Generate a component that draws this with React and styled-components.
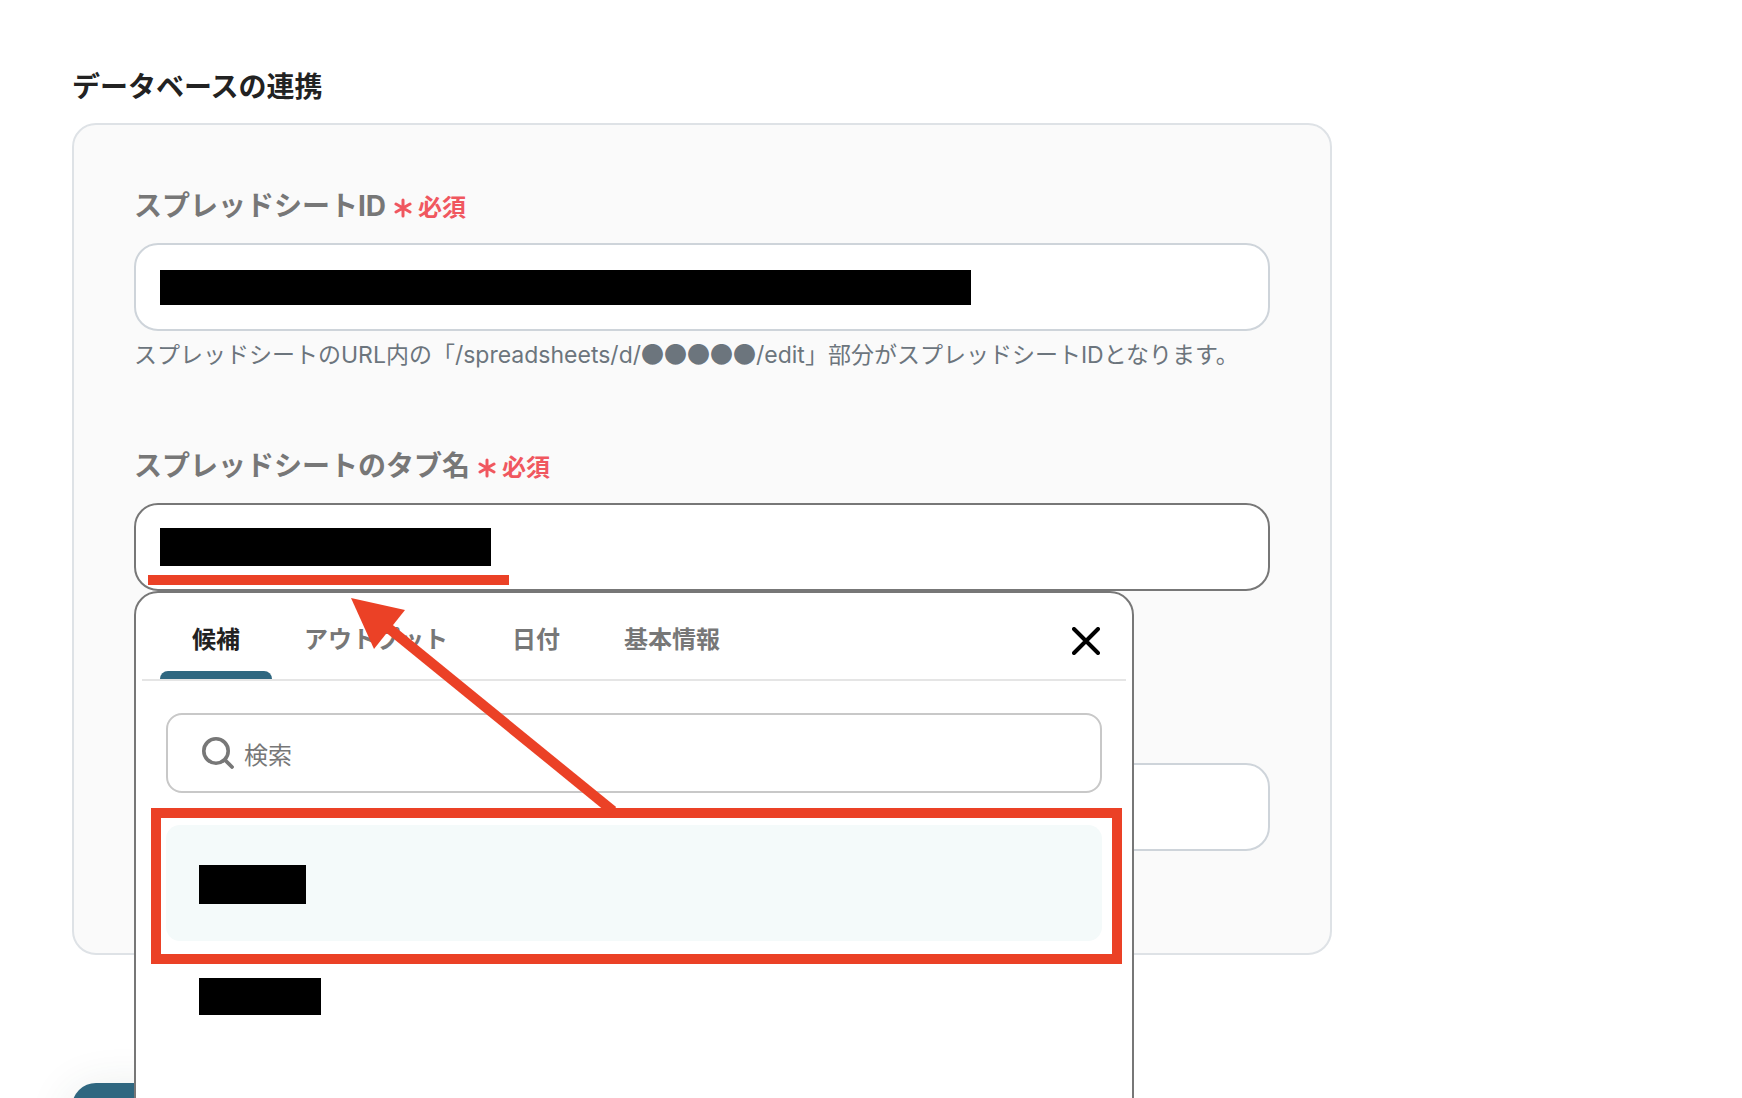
import React, { useState } from 'react';
import styled, { createGlobalStyle, css } from 'styled-components';

const tabs = ['候補', 'アウトプット', '日付', '基本情報'];

const Required = () => (
  <RequiredMark>
    <svg width="18" height="20" viewBox="0 0 18 20" aria-hidden="true">
      <path
        d="M9 2v16M2 6l14 8M16 6L2 14"
        stroke="currentColor"
        strokeWidth="3"
        strokeLinecap="round"
      />
    </svg>
    必須
  </RequiredMark>
);

const App = () => {
  const [activeTab, setActiveTab] = useState('候補');
  return (
    <Page>
      <GlobalStyle />
      <Form>
        <Title>データベースの連携</Title>
        <Card>
          <Field>
            <LabelRow>
              <label htmlFor="sheet-id">スプレッドシートID</label>
              <Required />
            </LabelRow>
            <Control>
              <TextInput id="sheet-id" type="text" />
              <InputMask $width={811} $height={35} />
            </Control>
            <Help>
              スプレッドシートのURL内の「/spreadsheets/d/<Dots>●●●●●</Dots>/edit」部分がスプレッドシートIDとなります。
            </Help>
          </Field>
          <Field>
            <LabelRow>
              <label htmlFor="sheet-tab">スプレッドシートのタブ名</label>
              <Required />
            </LabelRow>
            <Control>
              <TextInput id="sheet-tab" type="text" $active />
              <InputMask $width={331} $height={38} />
              <Underline />
              <Dropdown>
                <TabBar>
                  <TabList role="tablist">
                    {tabs.map(tab => (
                      <Tab
                        key={tab}
                        type="button"
                        role="tab"
                        aria-selected={tab === activeTab}
                        $active={tab === activeTab}
                        onClick={() => setActiveTab(tab)}
                      >
                        {tab}
                      </Tab>
                    ))}
                  </TabList>
                  <CloseButton type="button" aria-label="閉じる">
                    <svg width="28" height="28" viewBox="0 0 28 28">
                      <path
                        d="M2 2l24 24M26 2L2 26"
                        stroke="#000"
                        strokeWidth="4"
                        strokeLinecap="round"
                      />
                    </svg>
                  </CloseButton>
                </TabBar>
                <Search>
                  <svg
                    width="32"
                    height="32"
                    viewBox="0 0 32 32"
                    fill="none"
                    aria-hidden="true"
                  >
                    <circle cx="14" cy="14" r="12.2" stroke="#777" strokeWidth="3.6" />
                    <path
                      d="M23 23l7 7"
                      stroke="#777"
                      strokeWidth="3.8"
                      strokeLinecap="round"
                    />
                  </svg>
                  <SearchInput type="text" placeholder="検索" aria-label="検索" />
                </Search>
                <Options>
                  <Option type="button" $selected>
                    <Mask $width={107} $height={39} />
                    <Highlight />
                  </Option>
                  <Option type="button">
                    <Mask $width={122} $height={37} />
                  </Option>
                </Options>
              </Dropdown>
              <Arrow width="270" height="220" viewBox="0 0 270 220" aria-hidden="true">
                <path d="M35 28L262 213" stroke="#eb4126" strokeWidth="10" />
                <path d="M0 0L54 12L23 51Z" fill="#eb4126" />
              </Arrow>
            </Control>
            <Help />
          </Field>
          <Field>
            <LabelRow />
            <Control>
              <TextInput type="text" aria-label="入力" />
            </Control>
            <Help />
          </Field>
        </Card>
        <SubmitButton type="submit" aria-label="保存" />
      </Form>
    </Page>
  );
};
export default App;

const GlobalStyle = createGlobalStyle`
  * {
    box-sizing: border-box;
  }
  body {
    margin: 0;
    background: #fff;
    font-family: "Noto Sans CJK JP", sans-serif;
  }
  button, input {
    font-family: inherit;
  }
`;
const Page = styled.main`
  height: 100vh;
  overflow: hidden;
  padding: 65px 72px 0;
`;
const Form = styled.form`
  max-width: 1260px;
`;
const Title = styled.h1`
  margin: 0 0 18px;
  font-size: 28px;
  line-height: 40px;
  font-weight: 700;
  color: #222;
`;
const Card = styled.section`
  display: flex;
  flex-direction: column;
  gap: 72px;
  padding: 60px;
  border: 2px solid #dee2e6;
  border-radius: 24px;
  background: #fafafa;
`;
const Field = styled.div`
  display: flex;
  flex-direction: column;
`;
const LabelRow = styled.div`
  display: flex;
  align-items: baseline;
  gap: 8px;
  height: 42px;
  margin-bottom: 16px;
  font-family: Inter, 'Noto Sans CJK JP', sans-serif;
  font-size: 28px;
  line-height: 42px;
  font-weight: 700;
  color: #777;
`;
const RequiredMark = styled.span`
  font-size: 24px;
  color: #f0575f;
  svg {
    margin-right: 6px;
    vertical-align: -2px;
  }
`;
const Control = styled.div`
  position: relative;
`;
const TextInput = styled.input`
  display: block;
  width: 100%;
  height: 88px;
  padding: 0 24px;
  border: 2px solid ${({ $active }) => ($active ? '#777' : '#ced4da')};
  border-radius: 24px;
  outline: none;
  background: #fff;
  font-size: 28px;
`;
const Mask = styled.span`
  display: block;
  width: ${({ $width }) => $width}px;
  height: ${({ $height }) => $height}px;
  background: #000;
`;
const InputMask = styled(Mask)`
  position: absolute;
  top: 0;
  bottom: 0;
  left: 26px;
  margin: auto 0;
`;
const Underline = styled.span`
  position: absolute;
  left: 14px;
  bottom: 6px;
  width: 361px;
  height: 10px;
  background: #eb4126;
`;
const Help = styled.p`
  min-height: 36px;
  margin: 6px 0 0;
  font-family: Inter, 'Noto Sans CJK JP', sans-serif;
  font-size: 23px;
  line-height: 32px;
  color: #6c757d;
`;
const Dots = styled.span`
  font-family: 'Noto Sans CJK JP', sans-serif;
`;
const Dropdown = styled.div`
  position: absolute;
  z-index: 1;
  top: 100%;
  left: 0;
  width: 100%;
  max-width: 1000px;
  min-height: 600px;
  padding: 0 6px;
  border: 2px solid #777;
  border-radius: 24px;
  background: #fff;
`;
const TabBar = styled.div`
  display: flex;
  align-items: center;
  justify-content: space-between;
  padding: 0 26px 0 18px;
  border-bottom: 2px solid #e5e5e5;
`;
const TabList = styled.div`
  display: flex;
`;
const Tab = styled.button`
  position: relative;
  height: 86px;
  padding: 4px 32px 0;
  border: 0;
  background: none;
  font-size: 24px;
  line-height: 36px;
  font-weight: 700;
  color: #777;
  cursor: pointer;
  ${({ $active }) =>
    $active &&
    css`
      color: #222;
      &::after {
        content: '';
        position: absolute;
        left: 0;
        right: 0;
        bottom: 0;
        height: 8px;
        border-radius: 8px 8px 0 0;
        background: #2f6780;
      }
    `}
`;
const CloseButton = styled.button`
  display: flex;
  padding: 10px 0 0;
  border: 0;
  background: none;
  cursor: pointer;
`;
const Search = styled.div`
  display: flex;
  align-items: center;
  gap: 10px;
  height: 80px;
  margin: 32px 24px;
  padding: 0 34px;
  border: 2px solid #c8c8c8;
  border-radius: 16px;
`;
const SearchInput = styled.input`
  flex: 1;
  min-width: 0;
  padding: 2px 0 0;
  border: 0;
  outline: none;
  background: none;
  font-size: 24px;
  line-height: 36px;
  &::placeholder {
    color: #777;
    opacity: 1;
  }
`;
const Options = styled.div`
  display: flex;
  flex-direction: column;
  margin: 0 24px;
`;
const Option = styled.button`
  position: relative;
  display: flex;
  align-items: center;
  height: ${({ $selected }) => ($selected ? 116 : 108)}px;
  padding: 2px 33px 0;
  border: 0;
  border-radius: 14px;
  background: ${({ $selected }) => ($selected ? '#f4fafa' : '#fff')};
`;
const Highlight = styled.span`
  position: absolute;
  top: -17px;
  right: -20px;
  bottom: -23px;
  left: -15px;
  z-index: 1;
  border: 10px solid #eb4126;
`;
const Arrow = styled.svg`
  position: absolute;
  z-index: 2;
  top: 95px;
  left: 217px;
  pointer-events: none;
`;
const SubmitButton = styled.button`
  width: 360px;
  height: 96px;
  margin-top: 128px;
  border: 0;
  border-radius: 24px;
  background: #2f6780;
  box-shadow: 0 8px 48px rgba(40, 70, 60, 0.12);
`;
